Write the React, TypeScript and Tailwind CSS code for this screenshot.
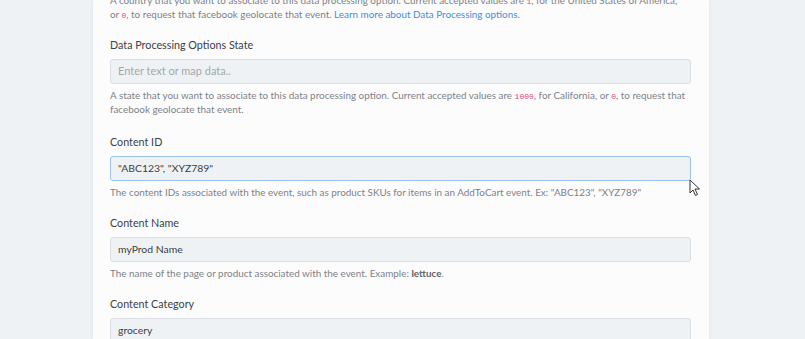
import React from 'react';

const Code: React.FC<{ children: React.ReactNode }> = ({ children }) => (
  <code className="font-['Liberation_Mono',monospace] text-[8px] leading-none text-[#e0457b]">{children}</code>
);

const Field: React.FC<{
  label: string;
  value?: string;
  placeholder?: string;
  focused?: boolean;
  spaced?: boolean;
  children?: React.ReactNode;
}> = ({ label, value, placeholder, focused, spaced, children }) => (
  <div className={spaced ? 'mt-[16px] pb-[2px]' : 'mt-[16px]'}>
    <label className="block text-[10.75px] leading-[16px] text-[#3b4045]">{label}</label>
    <div
      className={`mt-[6px] h-[25px] rounded-[3px] border bg-[#eff2f4] px-[7px] flex items-center text-[10.4px] ${
        focused ? 'border-[#9cc3e8]' : 'border-[#dadfe3]'
      }`}
    >
      {value ? (
        <span className="text-[#3a3f44]">{value}</span>
      ) : (
        <span className="text-[#a3a8ad] text-[11px]">{placeholder}</span>
      )}
    </div>
    {children && <p className="mt-[4px] text-[9.9px] leading-[14px] text-[#7d8287]">{children}</p>}
  </div>
);

export default function App() {
  return (
    <div className="relative flex h-[339px] w-[805px] overflow-hidden bg-[#eef2f5] font-['Lato',sans-serif]">
      <div className="w-[93px] shrink-0" />
      <div className="w-[616px] shrink-0 bg-[#fcfcfd] pl-[17px] pr-[18px] shadow-[0_0_3px_rgba(0,0,0,0.08)]">
        <p className="-mt-[7px] text-[9.9px] leading-[14px] text-[#7d8287]">
          A country that you want to associate to this data processing option. Current accepted values are <Code>1</Code>, for the United States of America,
          <br />
          or <Code>0</Code>, to request that facebook geolocate that event.{' '}
          <a className="text-[#3d8fdb]">Learn more about Data Processing options.</a>
        </p>

        <Field label="Data Processing Options State" placeholder="Enter text or map data.." spaced>
          A state that you want to associate to this data processing option. Current accepted values are <Code>1000</Code>, for California, or{' '}
          <Code>0</Code>, to request that facebook geolocate that event.
        </Field>

        <Field label="Content ID" value={'"ABC123", "XYZ789"'} focused>
          The content IDs associated with the event, such as product SKUs for items in an AddToCart event. Ex: "ABC123", "XYZ789"
        </Field>

        <Field label="Content Name" value="myProd Name">
          The name of the page or product associated with the event. Example: <b className="font-bold text-[#5d6267]">lettuce</b>.
        </Field>

        <Field label="Content Category" value="grocery" />
      </div>

      {/* mouse pointer */}
      <svg className="absolute left-[689px] top-[179px]" width="12" height="18" viewBox="0 0 12 18">
        <path d="M1 1 L1 14 L4 11 L6.5 16.5 L8.5 15.5 L6 10 L10.5 10 Z" fill="#fff" stroke="#333" strokeWidth="1" strokeLinejoin="round" />
      </svg>
    </div>
  );
}
